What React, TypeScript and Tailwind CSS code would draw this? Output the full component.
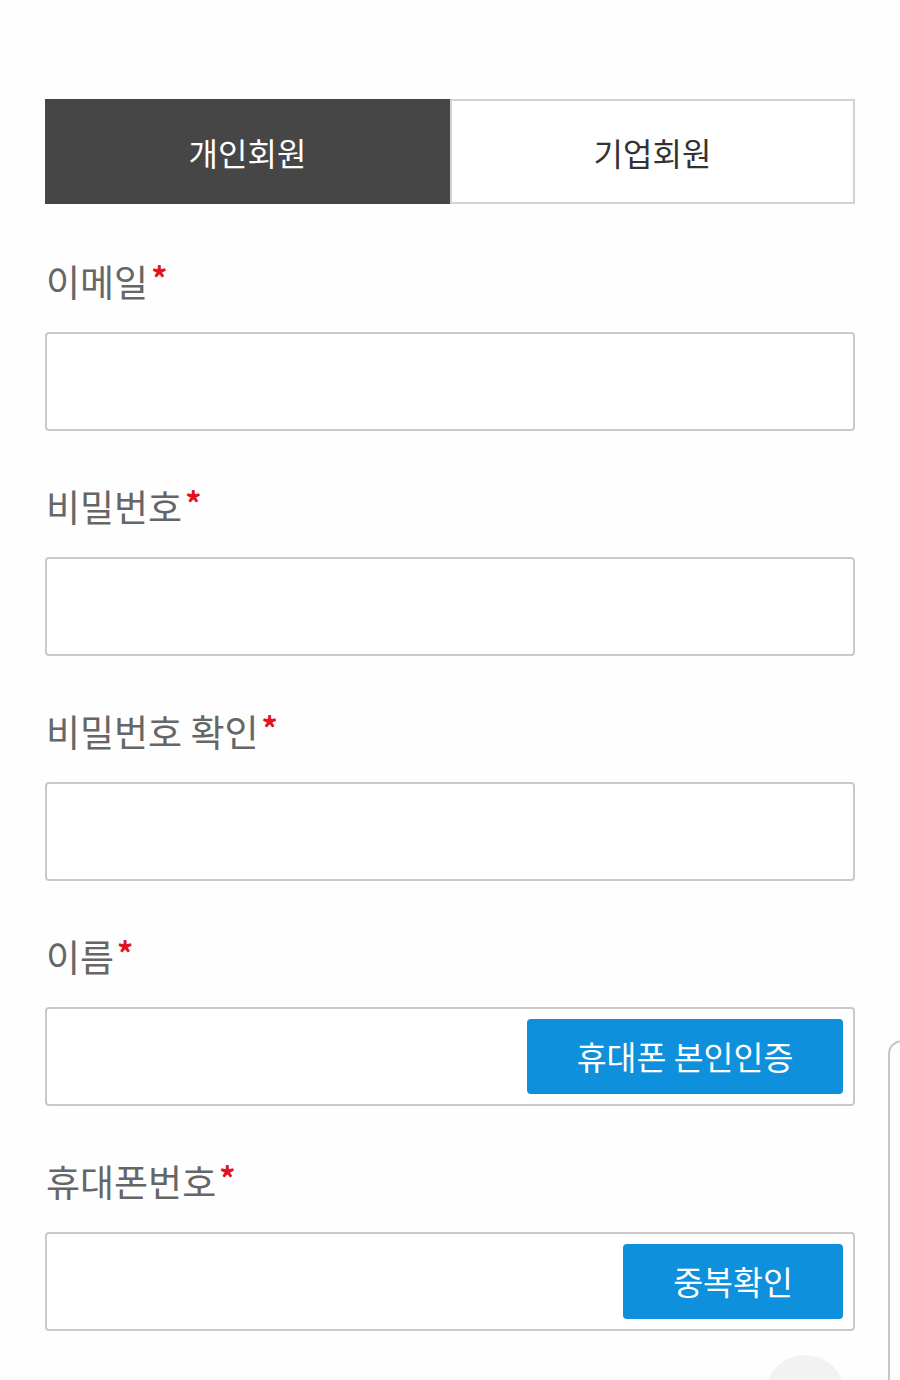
import React from 'react';

const font = { fontFamily: '"Noto Sans CJK KR", "Noto Sans", sans-serif' };

interface FieldProps {
  label: string;
  action?: string;
  actionWidth?: string;
}

const Field: React.FC<FieldProps> = ({ label, action, actionWidth }) => (
  <div className="mt-[50px]">
    <div className="h-[50px] flex items-center pl-[1px] mb-[26px]">
      <span className="text-[37px] text-[#666666] leading-none">{label}</span>
      <span className="text-[32px] font-bold text-[#e0141e] leading-none self-start mt-[5px] ml-[3px]">*</span>
    </div>
    <div className="h-[99px] border-2 border-[#c9c9c9] rounded-[4px] bg-white flex items-center justify-end pr-[10px]">
      {action && (
        <button
          className={`${actionWidth} h-[75px] bg-[#0e90dc] rounded-[4px] text-white text-[32.5px] leading-none`}
        >
          {action}
        </button>
      )}
    </div>
  </div>
);

export default function App() {
  return (
    <div className="relative w-[900px] h-[1380px] overflow-hidden bg-[#fefefe]" style={font}>
      <div className="px-[45px] pt-[99px]">
        <div className="flex h-[105px]">
          <div className="w-[405px] bg-[#464646] flex items-center justify-center text-white text-[32px] leading-none">
            개인회원
          </div>
          <div className="flex-1 border-2 border-[#d2d2d2] bg-white flex items-center justify-center text-[#333333] text-[32px] leading-none">
            기업회원
          </div>
        </div>

        <div className="pt-[2px]">
          <Field label="이메일" />
          <Field label="비밀번호" />
          <Field label="비밀번호 확인" />
          <Field label="이름" action="휴대폰 본인인증" actionWidth="w-[316px]" />
          <Field label="휴대폰번호" action="중복확인" actionWidth="w-[220px]" />
        </div>
      </div>

      {/* floating overlay edges */}
      <div className="absolute left-[888px] top-[1040px] w-[60px] h-[400px] border-2 border-[#c6c6c6] rounded-[14px] bg-[#fdfdfd]" />
      <div className="absolute left-[765px] top-[1355px] w-[80px] h-[80px] rounded-full bg-[#f2f2f2]" />
    </div>
  );
}
